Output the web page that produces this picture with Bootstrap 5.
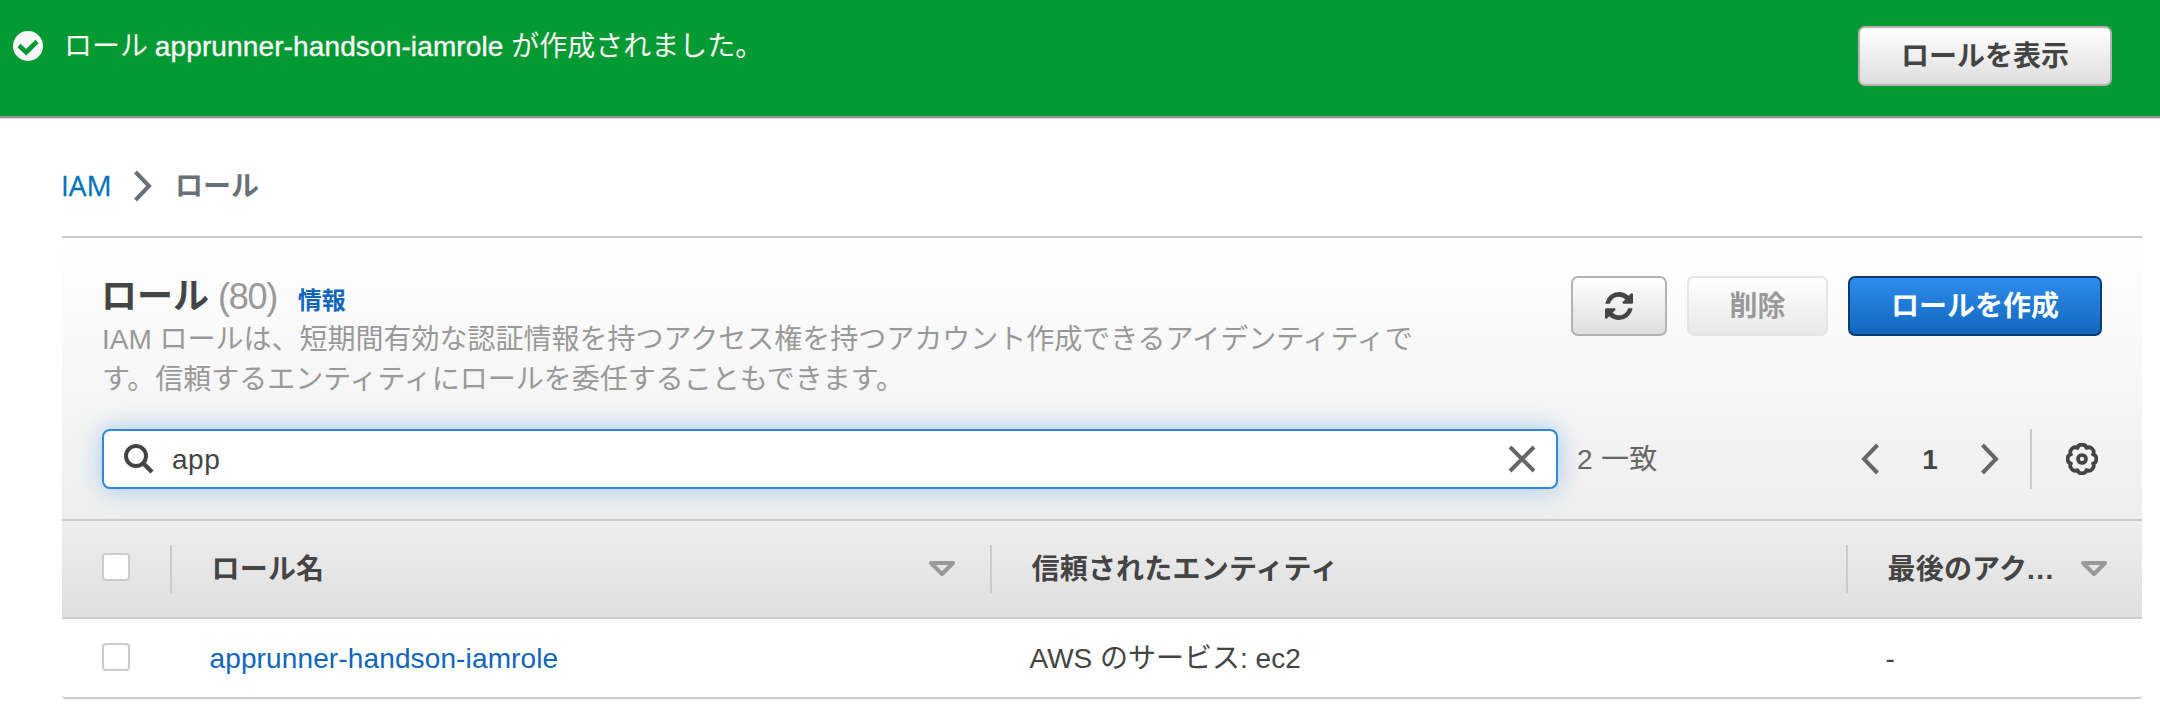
<!DOCTYPE html>
<html lang="ja">
<head>
<meta charset="utf-8">
<title>IAM ロール</title>
<link href="https://cdn.jsdelivr.net/npm/bootstrap@5.3.0/dist/css/bootstrap.min.css" rel="stylesheet">
<style>
body{font-family:"Liberation Sans","Noto Sans CJK JP",sans-serif;font-size:28px;line-height:40px;color:#444;background:#fff;overflow:hidden}
a{text-decoration:none;color:#1166bb}
svg{display:block;flex:none}
.flash{height:118px;background:#039933;border-bottom:2px solid #8f959c;box-shadow:0 1px 0 #d5dbdb;margin-bottom:1px;color:#f7f7f7;padding:26px 48px 0 13px}
.flash svg{margin-top:5px}
.flash-text{margin:1px 0 0 21px}
.med{-webkit-text-stroke:.4px currentColor;letter-spacing:.13px;margin-left:-1px}
.abtn{height:60px;border:2px solid #b3b3b3;border-radius:7px;padding:2px 0 0;font-size:28px;font-weight:700;color:#444;background:linear-gradient(#fff,#dedede);display:flex;align-items:center;justify-content:center}
.abtn.off{border-color:#e5e5e5;background:linear-gradient(#fff,#e8e8e8);color:#999;opacity:1}
.abtn.prime{border-color:#0a3c70;background:linear-gradient(#2e8ded,#1166bb);color:#fff}
.w-wide{width:254px}
.w-mid{width:141px}
.w-icon{width:96px;padding-top:0}
.crumbs{padding:48px 0 0 61px;height:117px}
.crumbs a{font-family:"Open Sans",sans-serif;color:#0073bb;width:72px;margin-top:-2px;-webkit-text-stroke:.3px currentColor}
.crumbs svg{margin:3px 22px 0 0}
.crumbs .here{font-weight:700;color:#687078}
.panel{margin:0 18px 0 62px;border-top:2px solid #ccc}
.panel-top{height:281px;background:linear-gradient(#fff,#eee);padding:0 40px}
.title-line{height:82px;padding-top:39px}
.title-line h1{font-size:36px;line-height:40px;font-weight:700;margin:0 0 0 -1px}
.count{font-size:36px;color:#999;letter-spacing:-1.3px;margin-left:9px}
.info-link{font-size:24px;font-weight:700;margin-left:21px}
.desc{color:#999;white-space:nowrap;margin:0}
.tools{gap:20px;padding-top:38px}
.search-row{margin-top:29px}
.search-box{width:1456px;height:60px;background:#fff;border:2px solid #2e88e0;border-radius:8px;box-shadow:0 0 24px rgba(46,136,224,.4);padding:0 20px}
.term{margin-left:18px;padding-top:2px;letter-spacing:.5px}
.matches{margin-left:19px;color:#666;padding-top:1px;letter-spacing:.3px}
.pager{padding-right:4px}
.pg{width:100px;text-align:center;padding-top:1px}
.gear-line{height:60px;margin:0 34px 0 30px}
.vline{width:2px;flex:none;background:#ccc}
.thead-row .vline{height:48px}
.thead-row{height:100px;border-top:2px solid #ccc;border-bottom:2px solid #ccc;background:linear-gradient(#eee,#dfdfdf);font-weight:700}
.body-row{height:80px;border-bottom:2px solid #ccc;border-radius:0 0 3px 3px}
.cell-check{width:108px;padding-left:40px}
.cell-name{width:820px;padding-right:34px}
.cell-trust{width:856px}
.cell-last{width:296px;padding-right:34px}
.hd{margin-left:39.5px;padding-top:2px;letter-spacing:.2px}
.bd{padding:2px 0 0 39.5px}
.row-link{letter-spacing:.13px}
.dots{letter-spacing:1.4px}
.tick{width:28px;height:28px;background:#fff;border:2px solid #ccc;border-radius:4px;margin-bottom:4px}
.body-row .tick{margin-bottom:2px}
</style>
</head>
<body>
<header class="flash d-flex align-items-start">
  <svg width="30" height="30" viewBox="0 0 30 30"><circle cx="15" cy="15" r="15" fill="#f7f7f7"/><path d="M6 14.500l7.200 6.700L24 10.500" fill="none" stroke="#039933" stroke-width="4.600"/></svg>
  <div class="flash-text">ロール <span class="med">apprunner-handson-iamrole</span> が作成されました。</div>
  <button class="btn abtn w-wide ms-auto">ロールを表示</button>
</header>
<nav class="crumbs d-flex">
  <a href="#">IAM</a>
  <svg width="20" height="32" viewBox="0 0 20 32"><path d="M2.500 2l13.500 14L2.500 30" fill="none" stroke="#687078" stroke-width="4"/></svg>
  <span class="here">ロール</span>
</nav>
<main class="panel">
  <section class="panel-top">
    <div class="d-flex justify-content-between">
      <div>
        <div class="title-line d-flex align-items-baseline"><h1>ロール</h1><span class="count">(80)</span><a class="info-link" href="#">情報</a></div>
        <p class="desc">IAM ロールは、短期間有効な認証情報を持つアクセス権を持つアカウント作成できるアイデンティティで<br>す。信頼するエンティティにロールを委任することもできます。</p>
      </div>
      <div class="tools d-flex">
        <button class="btn abtn w-icon" aria-label="更新"><svg width="28" height="28" viewBox="0 0 1536 1536" fill="#444"><path d="M1511 928q0 5-1 7-64 268-268 434.500T764 1536q-146 0-282.500-55T238 1324l-129 129q-19 19-45 19t-45-19-19-45V960q0-26 19-45t45-19h448q26 0 45 19t19 45-19 45l-137 137q71 66 161 102t187 36q134 0 250-65t186-179q11-17 53-117 8-23 30-23h192q13 0 22.500 9.500t9.500 22.500zm25-800v448q0 26-19 45t-45 19h-448q-26 0-45-19t-19-45 19-45l138-138Q969 256 768 256q-134 0-250 65T332 500q-11 17-53 117-8 23-30 23H50q-13 0-22.500-9.500T18 608v-7q65-268 270-434.500T768 0q146 0 284 55.500T1297 212l130-129q19-19 45-19t45 19 19 45z"/></svg></button>
        <button class="btn abtn off w-mid" disabled>削除</button>
        <button class="btn abtn prime w-wide">ロールを作成</button>
      </div>
    </div>
    <div class="search-row d-flex align-items-center">
      <div class="search-box d-flex align-items-center">
        <svg width="30" height="30" viewBox="0 0 30 30"><circle cx="12" cy="12" r="10" fill="none" stroke="#444" stroke-width="4"/><path d="M19 19l9 9" stroke="#444" stroke-width="4.500"/></svg>
        <span class="term">app</span>
        <svg class="ms-auto" width="28" height="28" viewBox="0 0 28 28"><path d="M2 2l24 24M26 2L2 26" stroke="#666" stroke-width="4"/></svg>
      </div>
      <span class="matches">2 一致</span>
      <div class="pager ms-auto d-flex align-items-center">
        <svg width="20" height="32" viewBox="0 0 20 32"><path d="M17.500 2L4 16l13.500 14" fill="none" stroke="#666" stroke-width="4"/></svg>
        <b class="pg">1</b>
        <svg width="20" height="32" viewBox="0 0 20 32"><path d="M2.500 2L16 16 2.500 30" fill="none" stroke="#666" stroke-width="4"/></svg>
        <div class="vline gear-line"></div>
        <svg width="32" height="32" viewBox="0 0 32 32" fill="none" stroke="#444" stroke-width="3.700"><circle cx="16" cy="16" r="4"/><path stroke-linejoin="round" d="M27 20.500C29.500 24.500 24.500 29.500 20.500 27C19.800 31.500 12.200 31.500 11.500 27C7.500 29.500 2.500 24.500 5 20.500C.5 19.800.5 12.200 5 11.500C2.500 7.500 7.500 2.500 11.500 5C12.200.5 19.800.5 20.500 5C24.500 2.500 29.500 7.500 27 11.500C31.500 12.200 31.500 19.800 27 20.500z"/></svg>
      </div>
    </div>
  </section>
  <section>
    <div class="thead-row d-flex align-items-center">
      <div class="cell-check"><div class="tick"></div></div>
      <div class="cell-name d-flex align-items-center">
        <div class="vline"></div><span class="hd">ロール名</span>
        <svg class="ms-auto" width="28" height="16" viewBox="0 0 28 16"><path d="M3 2h22L14 13z" fill="none" stroke="#999" stroke-width="4" stroke-linejoin="round"/></svg>
      </div>
      <div class="cell-trust d-flex align-items-center"><div class="vline"></div><span class="hd">信頼されたエンティティ</span></div>
      <div class="cell-last d-flex align-items-center">
        <div class="vline"></div><span class="hd">最後のアク<span class="dots">...</span></span>
        <svg class="ms-auto" width="28" height="16" viewBox="0 0 28 16"><path d="M3 2h22L14 13z" fill="none" stroke="#999" stroke-width="4" stroke-linejoin="round"/></svg>
      </div>
    </div>
    <div class="body-row d-flex align-items-center">
      <div class="cell-check"><div class="tick"></div></div>
      <div class="cell-name bd"><a class="row-link" href="#">apprunner-handson-iamrole</a></div>
      <div class="cell-trust bd">AWS のサービス: ec2</div>
      <div class="cell-last bd">-</div>
    </div>
  </section>
</main>
<script src="https://cdn.jsdelivr.net/npm/bootstrap@5.3.0/dist/js/bootstrap.bundle.min.js"></script>
</body>
</html>
